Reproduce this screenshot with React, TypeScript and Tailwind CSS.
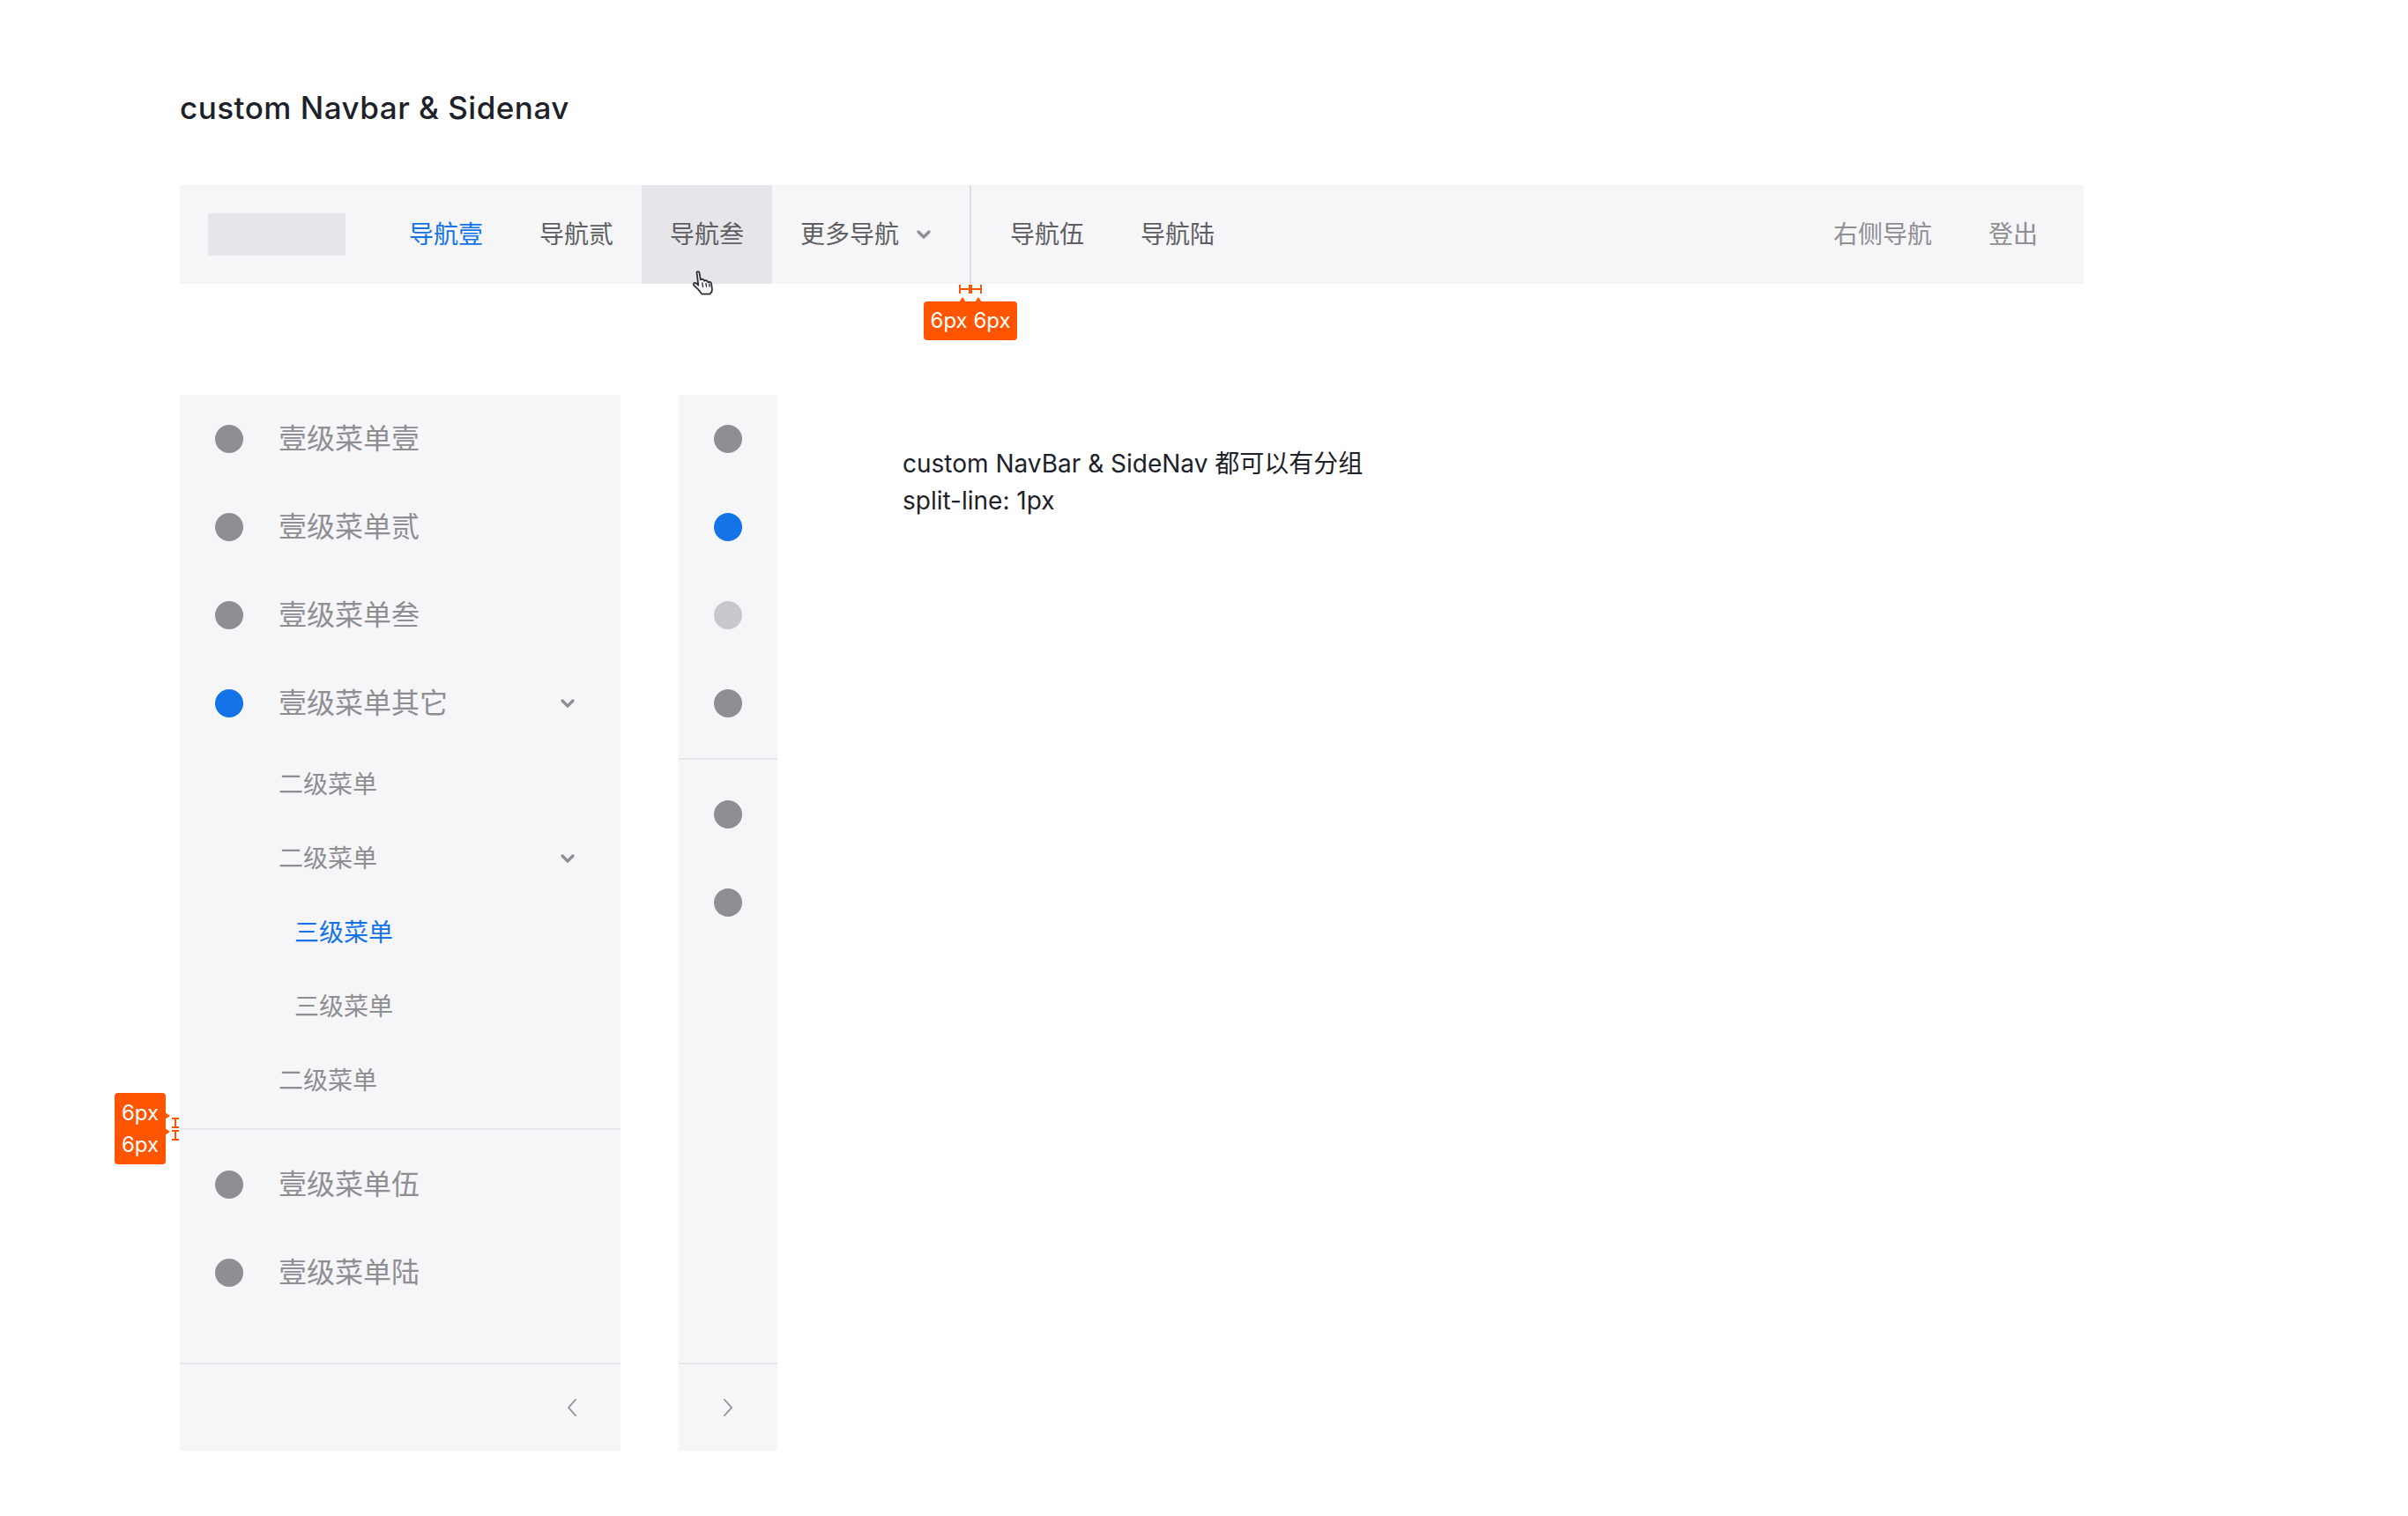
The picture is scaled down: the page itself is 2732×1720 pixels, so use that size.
import React from "react";

function ChevronDown() {
  return (
    <svg width="16" height="10" viewBox="0 0 16 10" fill="none">
      <path d="M2 2L8 8L14 2" stroke="#8e8e93" strokeWidth="3.2" strokeLinecap="round" strokeLinejoin="round" />
    </svg>
  );
}

function ChevronSide({ dir }: { dir: "left" | "right" }) {
  return (
    <svg width="12" height="20" viewBox="0 0 12 20" fill="none">
      <path
        d={dir === "left" ? "M10 1L2 10L10 19" : "M2 1L10 10L2 19"}
        stroke="#8e8e93"
        strokeWidth="1.8"
        strokeLinecap="round"
        strokeLinejoin="round"
      />
    </svg>
  );
}

function HandCursor() {
  return (
    <svg width="32" height="30" viewBox="0 0 32 30" fill="none">
      <path
        d="M8.5 3.2c0-1.4 2.6-1.6 2.9 0l1.4 8.2 1.2-.6c1.3-.5 2.3.3 2.6 1l.5.9 1.1-.4c1.3-.4 2.3.3 2.6 1l.5 1 1-.3c1.5-.3 2.6.6 2.8 1.9l.8 6.1c.2 1.6-.3 3-1.3 4.1l-1.4 1.6H14.4l-4.2-5.3-4.6-4.3c-1-1-1-2.4.2-2.9 1.2-.5 2.3.1 3.1 1l1.4 1.5L8.5 3.2z"
        fill="#f5f6f8"
        stroke="#2b2f36"
        strokeWidth="1.8"
        strokeLinejoin="round"
      />
      <path d="M15.5 19.5l-.8-4.6M19.5 19l-.6-3.4M23 18.8l-.4-2.6" stroke="#2b2f36" strokeWidth="1.4" strokeLinecap="round" />
    </svg>
  );
}

const navLeft = ["导航壹", "导航贰", "导航叁"];

function Dot({ tone }: { tone: "gray" | "blue" | "light" }) {
  const cls =
    tone === "blue" ? "bg-[#1473e6]" : tone === "light" ? "bg-[#c7c7cc]" : "bg-[#8e8e93]";
  return <span className={`block w-8 h-8 rounded-full shrink-0 ${cls}`} />;
}

function MainRow({ label, tone = "gray", arrow = false }: { label: string; tone?: "gray" | "blue" | "light"; arrow?: boolean }) {
  return (
    <div className="h-[100px] flex items-center pl-10 pr-[52px]">
      <Dot tone={tone} />
      <span className="ml-[40px] text-[32px] leading-none text-[#8e8e93]">{label}</span>
      {arrow && (
        <span className="ml-auto flex">
          <ChevronDown />
        </span>
      )}
    </div>
  );
}

function SubRow({ label, indent, active = false, arrow = false }: { label: string; indent: "two" | "three"; active?: boolean; arrow?: boolean }) {
  return (
    <div className={`h-[84px] flex items-center pr-[52px] ${indent === "two" ? "pl-[112px]" : "pl-[130px]"}`}>
      <span className={`text-[28px] leading-none ${active ? "text-[#1473e6]" : "text-[#8e8e93]"}`}>{label}</span>
      {arrow && (
        <span className="ml-auto flex">
          <ChevronDown />
        </span>
      )}
    </div>
  );
}

function Navbar() {
  return (
    <nav className="flex items-stretch h-[112px] w-[2160px] bg-[#f6f6f8] pl-8 pr-5">
      <div className="self-center w-[156px] h-12 bg-[#e5e5ea]" />
      <div className="flex items-stretch ml-10">
        {navLeft.map((item, i) => (
          <div
            key={item}
            className={`relative w-[148px] flex items-center justify-center text-[28px] ${
              i === 0 ? "text-[#1473e6]" : "text-[#5f5f63]"
            } ${i === 2 ? "bg-[#e5e5ea]" : ""}`}
          >
            {item}
            {i === 2 && (
              <span className="absolute left-[54px] top-[96px] z-10">
                <HandCursor />
              </span>
            )}
          </div>
        ))}
        <div className="flex items-center px-8 text-[28px] text-[#5f5f63]">
          <span>更多导航</span>
          <span className="ml-5 flex">
            <ChevronDown />
          </span>
        </div>
        <div className="relative mx-3 w-[2px] bg-[#dcdce0]">
          <div className="absolute left-[-12px] top-[113px] flex">
            <svg width="26" height="11" viewBox="0 0 26 11" fill="none">
              <path d="M1 0V10M12 0V10M1 5H12M14 0V10M25 0V10M14 5H25" stroke="#ff5500" strokeWidth="2" />
            </svg>
          </div>
          <div className="absolute left-[-52px] top-[132px] w-[106px] h-[44px] rounded-[4px] bg-[#ff5500] flex items-center justify-center text-[24px] text-white leading-none">
            <svg className="absolute left-[40px] top-[-6px]" width="26" height="7" viewBox="0 0 26 7">
              <path d="M0 7L4 1L8 7ZM18 7L22 1L26 7Z" fill="#ff5500" />
            </svg>
            6px 6px
          </div>
        </div>
        {["导航伍", "导航陆"].map((item) => (
          <div key={item} className="w-[148px] flex items-center justify-center text-[28px] text-[#5f5f63]">
            {item}
          </div>
        ))}
      </div>
      <div className="ml-auto flex items-stretch text-[28px] text-[#8e8e93]">
        <div className="flex items-center px-8">右侧导航</div>
        <div className="flex items-center px-8">登出</div>
      </div>
    </nav>
  );
}

function SideNav() {
  return (
    <aside className="relative w-[500px] h-[1198px] bg-[#f6f6f8] flex flex-col">
      <MainRow label="壹级菜单壹" />
      <MainRow label="壹级菜单贰" />
      <MainRow label="壹级菜单叁" />
      <MainRow label="壹级菜单其它" tone="blue" arrow />
      <SubRow label="二级菜单" indent="two" />
      <SubRow label="二级菜单" indent="two" arrow />
      <SubRow label="三级菜单" indent="three" active />
      <SubRow label="三级菜单" indent="three" />
      <SubRow label="二级菜单" indent="two" />
      <div className="relative my-3 h-[2px] bg-[#e5e5ea]">
        <div className="absolute left-[-74px] top-[-40px] w-[58px] h-[81px] rounded-[4px] bg-[#ff5500] flex flex-col items-center justify-center text-[24px] leading-[36px] text-white">
          <svg className="absolute right-[-5px] top-[22px]" width="6" height="26" viewBox="0 0 6 26">
            <path d="M0 0L6 4L0 8ZM0 18L6 22L0 26Z" fill="#ff5500" />
          </svg>
          <span>6px</span>
          <span>6px</span>
        </div>
        <svg className="absolute left-[-10px] top-[-12px]" width="10" height="26" viewBox="0 0 10 26" fill="none">
          <path d="M1 1H9M5 1V11M1 11H9M1 15H9M5 15V25M1 25H9" stroke="#ff5500" strokeWidth="2" />
        </svg>
      </div>
      <MainRow label="壹级菜单伍" />
      <MainRow label="壹级菜单陆" />
      <div className="flex-1" />
      <div className="h-[100px] border-t-2 border-[#e5e5ea] flex items-center justify-end pr-[49px]">
        <ChevronSide dir="left" />
      </div>
    </aside>
  );
}

function CollapsedNav() {
  const tones: ("gray" | "blue" | "light")[] = ["gray", "blue", "light", "gray"];
  return (
    <aside className="w-[112px] h-[1198px] bg-[#f6f6f8] flex flex-col">
      {tones.map((t, i) => (
        <div key={i} className="h-[100px] flex items-center justify-center">
          <Dot tone={t} />
        </div>
      ))}
      <div className="my-3 h-[2px] bg-[#e5e5ea]" />
      {[0, 1].map((i) => (
        <div key={i} className="h-[100px] flex items-center justify-center">
          <Dot tone="gray" />
        </div>
      ))}
      <div className="flex-1" />
      <div className="h-[100px] border-t-2 border-[#e5e5ea] flex items-center justify-center">
        <ChevronSide dir="right" />
      </div>
    </aside>
  );
}

export default function App() {
  return (
    <div
      className="min-h-screen bg-white pl-[204px] pt-[98px]"
      style={{ fontFamily: 'Inter, "Noto Sans CJK SC", sans-serif' }}
    >
      <h1 className="text-[35px] leading-[48px] font-medium tracking-[0.5px] text-[#1d2129]">custom Navbar &amp; Sidenav</h1>
      <div className="mt-16">
        <Navbar />
      </div>
      <div className="mt-[126px] flex items-start">
        <SideNav />
        <div className="ml-[66px]">
          <CollapsedNav />
        </div>
        <div className="ml-[142px] mt-[57px] text-[28px] leading-[42px] text-[#1d2129]">
          <p>custom NavBar &amp; SideNav 都可以有分组</p>
          <p>split-line: 1px</p>
        </div>
      </div>
    </div>
  );
}
